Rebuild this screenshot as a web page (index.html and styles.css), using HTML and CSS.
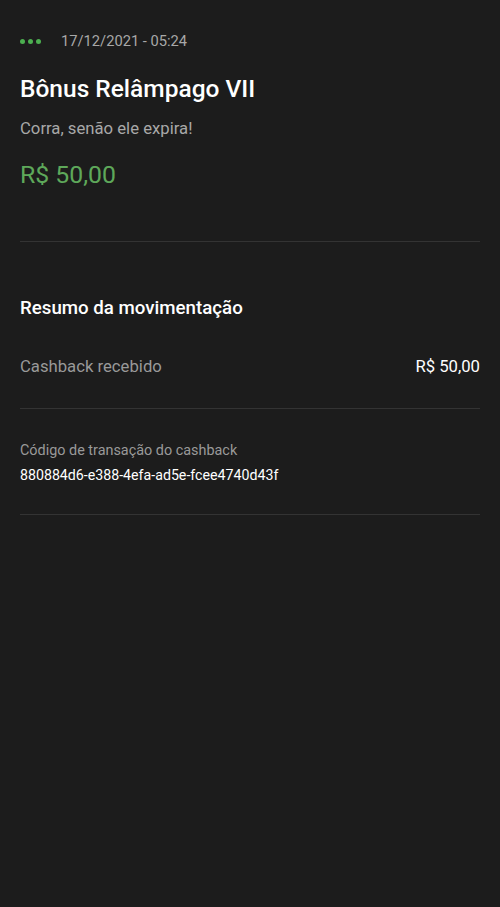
FILE: index.html
```html
<!DOCTYPE html>
<html lang="pt-BR">
<head>
    <meta charset="UTF-8">
    <meta name="viewport" content="width=device-width, initial-scale=1.0">
    <title>Bônus Relâmpago VII</title>
    <link rel="stylesheet" href="styles.css">
</head>
<body>
    <div class="cabecalho">
        <div class="topo">
            <span class="pontos"><i></i><i></i><i></i></span>
            <span class="data">17/12/2021 - 05:24</span>
        </div>
        <h1>Bônus Relâmpago VII</h1>
        <p class="subtitulo">Corra, senão ele expira!</p>
        <p class="valor">R$ 50,00</p>
    </div>

    <div class="resumo">
        <h2>Resumo da movimentação</h2>
        <div class="linha">
            <span class="rotulo">Cashback recebido</span>
            <span class="quantia">R$ 50,00</span>
        </div>
        <div class="codigo">
            <span class="rotulo-pequeno">Código de transação do cashback</span>
            <span class="id">880884d6-e388-4efa-ad5e-fcee4740d43f</span>
        </div>
    </div>
</body>
</html>
```

FILE: styles.css
```css
body {
    background-color: #1c1c1c;
    font-family: Roboto, "Liberation Sans", sans-serif;
    color: #ffffff;
    margin: 0;
    padding: 0 20px;
    height: 907px;
    box-sizing: border-box;
}
.cabecalho {
    padding-top: 31px;
    padding-bottom: 51px;
    border-bottom: 1px solid #333333;
}
.topo {
    display: flex;
    align-items: center;
    height: 20px;
}
.pontos {
    display: flex;
    gap: 3px;
    width: 41px;
}
.pontos i {
    width: 5px;
    height: 5px;
    border-radius: 50%;
    background-color: #4caf50;
}
.data {
    font-size: 14.7px;
    color: #a8a8a8;
}
h1 {
    font-size: 24.5px;
    font-weight: 500;
    margin: 23px 0 0;
    line-height: 30px;
}
.subtitulo {
    font-size: 16.7px;
    color: #a8a8a8;
    margin: 14px 0 0;
    line-height: 22px;
}
.valor {
    font-size: 24.8px;
    color: #5ea85a;
    margin: 20px 0 0;
    line-height: 30px;
}
/* Resumo */
h2 {
    font-size: 18.7px;
    font-weight: 500;
    margin: 54px 0 0;
    line-height: 24px;
}
.linha {
    display: flex;
    justify-content: space-between;
    align-items: center;
    margin-top: 37px;
    padding-bottom: 31px;
    border-bottom: 1px solid #333333;
    font-size: 16.7px;
    line-height: 20px;
}
.rotulo {
    color: #999999;
}
.codigo {
    display: flex;
    flex-direction: column;
    gap: 6px;
    padding: 32px 0 29px;
    border-bottom: 1px solid #333333;
    font-size: 14.2px;
    line-height: 19px;
}
.rotulo-pequeno {
    color: #999999;
    font-size: 14.4px;
}
```
